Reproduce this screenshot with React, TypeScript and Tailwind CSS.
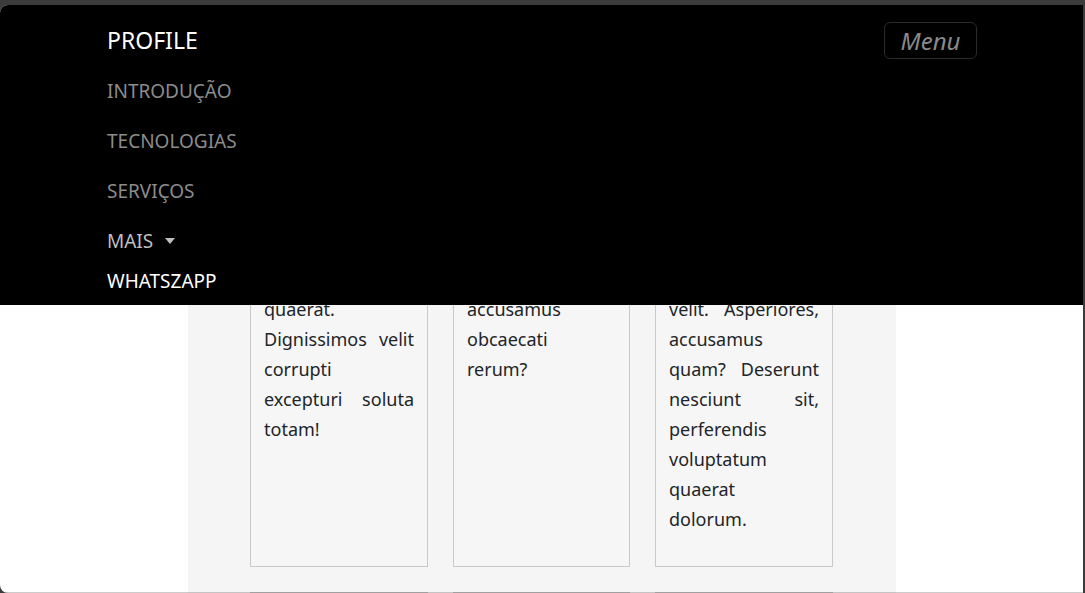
import React from "react";

const font = { fontFamily: '"Noto Sans", "Open Sans", sans-serif' };

type Card = { lines: string[] };

const cards: Card[] = [
  {
    lines: [
      "Lorem ipsum dolor",
      "sit amet, adipisicing",
      "elit. Eveniet illo",
      "nihil dolore",
      "quaerat.",
      "Dignissimos velit",
      "corrupti",
      "excepturi soluta",
      "totam!",
    ],
  },
  {
    lines: [
      "Lorem ipsum dolor",
      "sit amet elit. Ullam",
      "nemo quod natus",
      "ipsa distinctio",
      "accusamus",
      "obcaecati",
      "rerum?",
    ],
  },
  {
    lines: [
      "Lorem ipsum dolor",
      "sit amet consectetur",
      "adipisicing elit. Ad",
      "nobis tempore",
      "velit. Asperiores,",
      "accusamus",
      "quam? Deserunt",
      "nesciunt sit,",
      "perferendis",
      "voluptatum",
      "quaerat",
      "dolorum.",
    ],
  },
];

function CardBox({ card }: { card: Card }) {
  return (
    <div className="border border-[#c9c9c9] bg-[#f6f6f6] px-[13px] pt-[13px] pb-[32px] text-[18px] text-[#212529]">
      {card.lines.map((l, i) => (
        <div
          key={i}
          className={
            "h-[30px] leading-[30px] whitespace-nowrap " +
            (i === card.lines.length - 1 ? "" : "[text-align-last:justify] text-justify")
          }
        >
          {l}
        </div>
      ))}
    </div>
  );
}

export default function App() {
  return (
    <div className="w-[1085px] h-[593px] bg-[#3b3b3b] pt-[5px] overflow-hidden" style={font}>
      <div className="relative w-[1083px] h-[588px] bg-white overflow-hidden rounded-tl-[8px] rounded-bl-[8px]">
        {/* page content */}
        <div className="ml-[188px] w-[708px] bg-[#f5f5f5] pt-[155px] pl-[62px] pb-[40px]">
          <div className="grid grid-cols-[178px_177px_178px] gap-x-[25px] gap-y-[25px]">
            {cards.map((c, i) => (
              <CardBox key={i} card={c} />
            ))}
            <div className="h-[120px] border border-[#c9c9c9] bg-[#f6f6f6]" />
            <div className="h-[120px] border border-[#c9c9c9] bg-[#f6f6f6]" />
            <div className="h-[120px] border border-[#c9c9c9] bg-[#f6f6f6]" />
          </div>
        </div>

        {/* fixed navbar overlay */}
        <nav className="absolute top-0 left-0 right-0 h-[300px] bg-black">
          <div className="ml-[107px] w-[870px] flex flex-col">
            <div className="mt-[17px] h-[37px] flex items-center justify-between">
              <span className="text-white text-[23px] leading-none">PROFILE</span>
              <button className="w-[93px] h-[37px] border border-[#2a2a2a] rounded-[6px] text-[#8a8a8a] italic text-[24px] leading-none flex items-center justify-center">
                Menu
              </button>
            </div>
            <ul className="mt-[7px] flex flex-col text-[19px]">
              <li className="h-[50px] flex items-center text-[#8c8c8c]">INTRODUÇÃO</li>
              <li className="h-[50px] flex items-center text-[#8c8c8c]">TECNOLOGIAS</li>
              <li className="h-[50px] flex items-center text-[#8c8c8c]">SERVIÇOS</li>
              <li className="h-[50px] flex items-center text-[#bfbfbf]">
                MAIS
                <span className="ml-[12px] w-0 h-0 border-l-[5px] border-r-[5px] border-t-[6px] border-l-transparent border-r-transparent border-t-[#bfbfbf]" />
              </li>
              <li className="h-[30px] flex items-center text-white">WHATSZAPP</li>
            </ul>
          </div>
        </nav>

        <div className="absolute left-0 right-0 bottom-0 h-[1px] bg-black/20" />
      </div>
    </div>
  );
}
